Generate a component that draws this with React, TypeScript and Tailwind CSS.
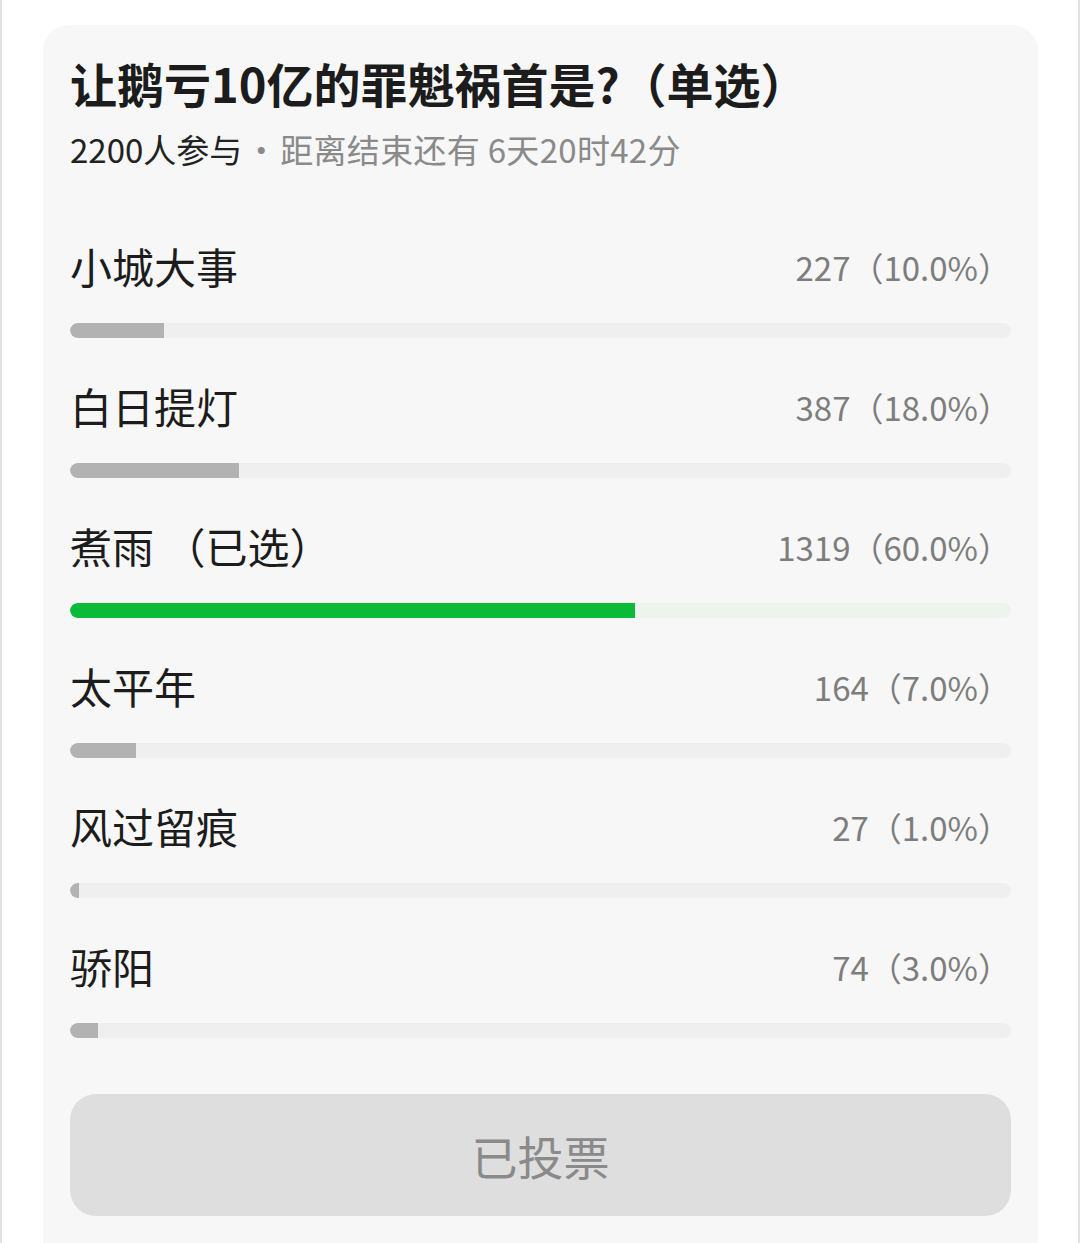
import React from "react";

const options = [
  { label: "小城大事", count: 227, pct: 10.0, selected: false },
  { label: "白日提灯", count: 387, pct: 18.0, selected: false },
  { label: "煮雨", count: 1319, pct: 60.0, selected: true },
  { label: "太平年", count: 164, pct: 7.0, selected: false },
  { label: "风过留痕", count: 27, pct: 1.0, selected: false },
  { label: "骄阳", count: 74, pct: 3.0, selected: false },
];

export default function App() {
  return (
    <div
      className="w-[1080px] h-[1243px] overflow-hidden bg-white border-l-2 border-r-2 border-[#e2e2e2]"
      style={{ fontFamily: '"Noto Sans CJK SC", "Noto Sans", sans-serif' }}
    >
      <div className="ml-[41px] mr-[40px] mt-[25px] rounded-[26px] bg-[#f7f7f7] pt-[30px] px-[27px] pb-[60px]">
        <h1 className="text-[47px] leading-[56px] font-bold text-[#1c1c1c]">
          让鹅亏10亿的罪魁祸首是?（单选）
        </h1>
        <p className="mt-[18px] flex items-center text-[33px] leading-[40px] text-[#8a8a8a]">
          <span className="text-[#222222]">2200人参与</span>
          <span className="inline-block w-[38px] text-center">·</span>
          <span className="tracking-[0.3px]">距离结束还有 6天20时42分</span>
        </p>
        <div className="mt-[75px] flex flex-col gap-[46px]">
          {options.map((o) => (
            <div key={o.label}>
              <div className="flex items-center justify-between h-[48px]">
                <span className="text-[42px] leading-[48px] text-[#1c1c1c] -translate-y-[2px]">
                  {o.label}
                  {o.selected ? " （已选）" : ""}
                </span>
                <span className="text-[33px] leading-[48px] text-[#7d7d7d] -translate-y-[1px]">
                  {o.count}（{o.pct.toFixed(1)}%）
                </span>
              </div>
              <div
                className={`mt-[31px] h-[15px] rounded-full overflow-hidden ${
                  o.selected ? "bg-[#edf4ed]" : "bg-[#efefef]"
                }`}
              >
                <div
                  className={`h-full rounded-l-full ${o.selected ? "bg-[#0aba38]" : "bg-[#b2b2b2]"}`}
                  style={{ width: `${o.pct}%` }}
                />
              </div>
            </div>
          ))}
        </div>
        <button className="mt-[56px] w-full h-[122px] rounded-[26px] bg-[#dedede] text-[46px] text-[#8a8a8a] flex items-center justify-center">
          已投票
        </button>
      </div>
    </div>
  );
}
